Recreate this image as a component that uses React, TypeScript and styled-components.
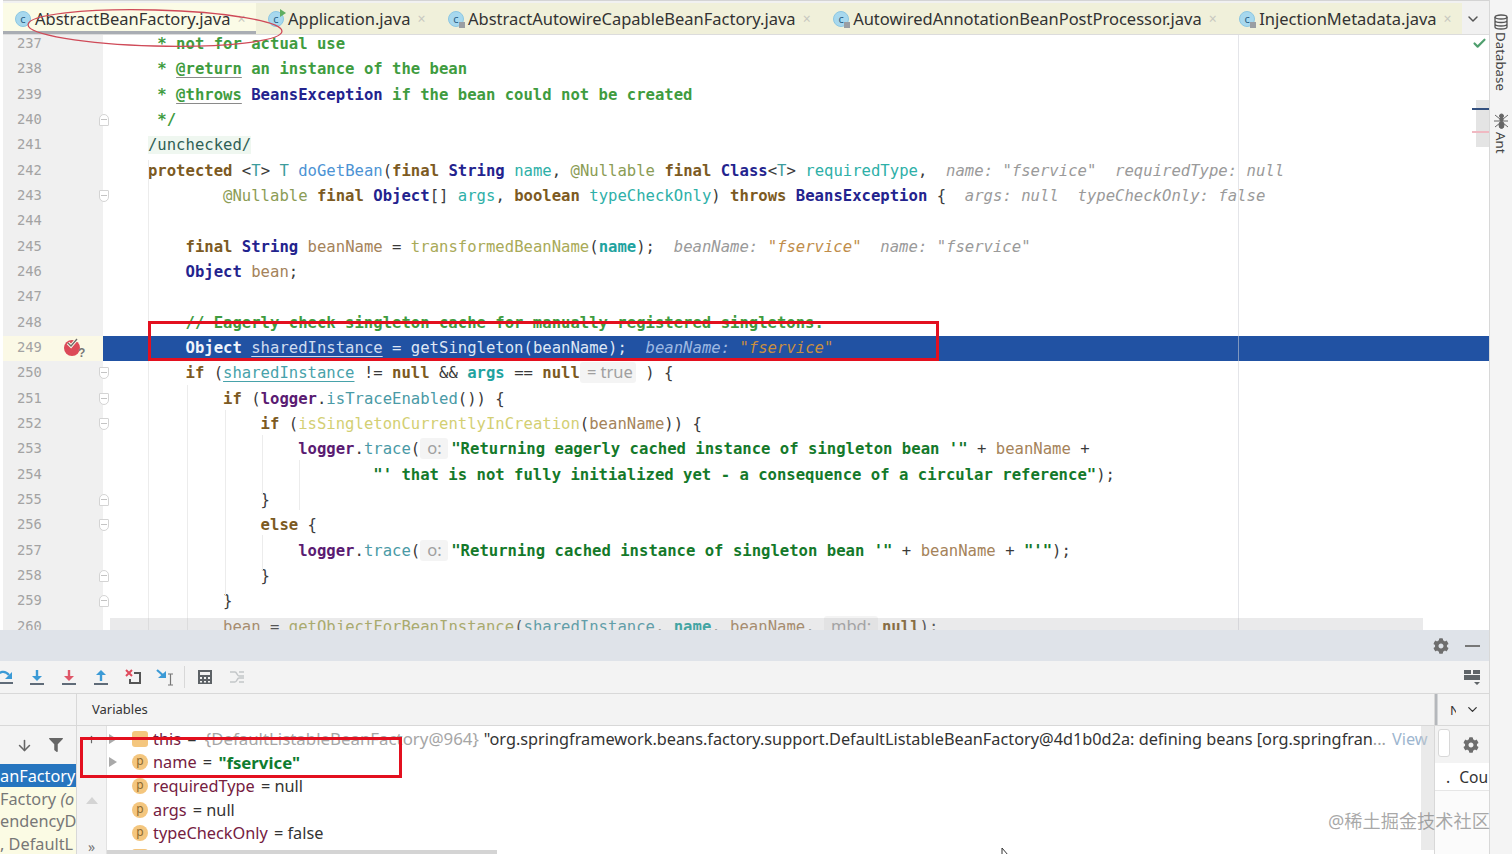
import React from "react";
import styled, { createGlobalStyle, css } from "styled-components";
import { ArrowDown, ChevronDown, Check, Plus } from "lucide-react";
import { FaCog, FaFilter } from "react-icons/fa";

const Global = createGlobalStyle`
  html, body { margin: 0; padding: 0; background: #fff; overflow: hidden; }
  * { box-sizing: border-box; }
`;

const MONO = `"DejaVu Sans Mono", monospace`;
const UI = `"Noto Sans", "Open Sans", sans-serif`;

const Page = styled.div`
  position: relative;
  width: 1512px;
  height: 854px;
  display: flex;
  overflow: hidden;
  font-family: ${UI};
`;
const Main = styled.div`
  width: 1489px;
  display: flex;
  flex-direction: column;
`;

/* tabs */
const TabBar = styled.div`
  height: 35px;
  margin-left: 3px;
  padding-top: 3px;
  display: flex;
  background: linear-gradient(#d4d4d4 0 1px, #f1f1f1 1px);
  border-bottom: 1px solid #dcdcdc;
`;
const Tab = styled.div<{ $active?: boolean }>`
  display: flex;
  align-items: center;
  flex: none;
  padding: 0 8.5px 0 12px;
  font-size: 16.5px;
  color: #333;
  background: ${(p) => (p.$active ? "#fbfbe6" : "#f0f0da")};
  ${(p) => p.$active && css`box-shadow: inset 0 -3px 0 #a9adb3;`}
`;
const ClassIcon = styled.span<{ $badge?: "lock" | "run" }>`
  position: relative;
  flex: none;
  width: 16px;
  height: 16px;
  margin-right: 4px;
  border-radius: 50%;
  background: #a7d8ee;
  border: 1px solid #8cc7e2;
  color: #2b5f85;
  font-size: 11px;
  line-height: 13px;
  text-align: center;
  &::after {
    content: "";
    position: absolute;
    ${(p) =>
      p.$badge === "run"
        ? css`
            top: -3px;
            right: -3px;
            width: 0;
            height: 0;
            border-left: 6px solid #5fae60;
            border-top: 4px solid transparent;
            border-bottom: 4px solid transparent;
          `
        : p.$badge === "lock"
        ? css`
            right: -2px;
            bottom: -2px;
            width: 6px;
            height: 6px;
            background: #9a9ea3;
          `
        : ""}
  }
`;
const TabClose = styled.span`
  margin-left: 7px;
  width: 10px;
  color: #c8c8c0;
  font-size: 14px;
  line-height: 1;
`;
const TabsEnd = styled.div`
  flex: 1;
  display: flex;
  align-items: center;
  justify-content: flex-end;
  padding-right: 8px;
  color: #555;
`;

/* editor */
const Editor = styled.div`
  position: relative;
  height: 595px;
  overflow: hidden;
  background: #fff;
`;
const Lines = styled.div`
  margin-top: -3px;
`;
const LineRow = styled.div<{ $current?: boolean }>`
  display: flex;
  height: 25.33px;
  line-height: 25.33px;
  font-family: ${MONO};
  font-size: 15.6px;
  background: ${(p) => (p.$current ? "#2152a3" : "transparent")};
`;
const Gutter = styled.div<{ $current?: boolean }>`
  position: relative;
  flex: none;
  width: 100px;
  margin-left: 3px;
  display: flex;
  background: ${(p) => (p.$current ? "#fbf9e6" : "#f0f0f0")};
  box-shadow: -3px 0 0 #fff;
`;
const LineNo = styled.span`
  width: 42px;
  padding-left: 14px;
  font-size: 13.8px;
  line-height: 23.6px;
  color: #a3a3a3;
  white-space: nowrap;
`;
const Fold = styled.span<{ $up?: boolean }>`
  position: absolute;
  right: -6px;
  top: 6px;
  width: 10px;
  height: 12px;
  background: #fff;
  border: 1px solid #d4d4d4;
  border-radius: ${(p) => (p.$up ? "5px 5px 1px 1px" : "1px 1px 5px 5px")};
  &::after {
    content: "";
    position: absolute;
    left: 1px;
    right: 1px;
    top: 4px;
    height: 1px;
    background: #c4c4c4;
  }
`;
const Code = styled.pre`
  margin: 0;
  padding-left: 7.4px;
  font: inherit;
  line-height: inherit;
  color: #3a3a3a;
  white-space: pre;
`;

const kinds: Record<string, ReturnType<typeof css>> = {
  kw: css`color: #7c5a22; font-weight: bold;`,
  type: css`color: #23238e; font-weight: bold;`,
  tpar: css`color: #3d9c9c;`,
  decl: css`color: #4c93d4;`,
  param: css`color: #2eb0a8;`,
  paramB: css`color: #1fa3a0; font-weight: bold;`,
  annot: css`color: #8b9c55;`,
  local: css`color: #a5835a;`,
  fn: css`color: #a9aa58;`,
  fn2: css`color: #d3cf73;`,
  logger: css`color: #5a1b72; font-weight: bold;`,
  call: css`color: #4a9aa6;`,
  str: css`color: #14792a; font-weight: bold;`,
  doc: css`color: #3f9c3f; font-weight: bold;`,
  tag: css`color: #3f9c3f; font-weight: bold; text-decoration: underline; text-decoration-color: #8a8a8a; text-underline-offset: 3px;`,
  unchecked: css`color: #2f5f55; background: #eff7f0;`,
  shared: css`color: #47a2aa; text-decoration: underline; text-underline-offset: 3px;`,
  hint: css`color: #9a9a9a; font-style: italic;`,
  hintStr: css`color: #c08d4a; font-style: italic;`,
  selB: css`color: #f2f5fb; font-weight: bold;`,
  sel: css`color: #dfe7f5;`,
  selShared: css`color: #cfdcf0; text-decoration: underline; text-underline-offset: 3px;`,
  selHint: css`color: #9db8e2; font-style: italic;`,
  selStr: css`color: #c98f3f; font-style: italic;`,
  plain: css``,
};
const Tok = styled.span<{ $k: string }>`
  ${(p) => kinds[p.$k]}
`;
const InlineHint = styled.span<{ $w: number; $after?: number }>`
  display: inline-block;
  width: ${(p) => p.$w}px;
  margin-right: ${(p) => p.$after ?? 0}px;
  padding-left: 7px;
  height: 21px;
  line-height: 20px;
  border-radius: 3px;
  background: #f4f4f4;
  color: #a0a0a0;
  font-family: ${UI};
  font-size: 16.5px;
  white-space: nowrap;
`;

type T = [string, string] | { hint: string; w: number; after?: number };
type L = { n: number; fold?: "up" | "down"; current?: boolean; toks: T[] };

const lines: L[] = [
  { n: 237, toks: [["doc", "     * not for actual use"]] },
  { n: 238, toks: [["doc", "     * "], ["tag", "@return"], ["doc", " an instance of the bean"]] },
  { n: 239, toks: [["doc", "     * "], ["tag", "@throws"], ["plain", " "], ["type", "BeansException"], ["doc", " if the bean could not be created"]] },
  { n: 240, fold: "up", toks: [["doc", "     */"]] },
  { n: 241, toks: [["plain", "    "], ["unchecked", "/unchecked/"]] },
  {
    n: 242,
    toks: [
      ["plain", "    "], ["kw", "protected"], ["plain", " <"], ["tpar", "T"], ["plain", "> "], ["tpar", "T"], ["plain", " "],
      ["decl", "doGetBean"], ["plain", "("], ["kw", "final"], ["plain", " "], ["type", "String"], ["plain", " "], ["param", "name"],
      ["plain", ", "], ["annot", "@Nullable"], ["plain", " "], ["kw", "final"], ["plain", " "], ["type", "Class"], ["plain", "<"],
      ["tpar", "T"], ["plain", "> "], ["param", "requiredType"], ["plain", ",  "], ["hint", 'name: "fservice"  requiredType: null'],
    ],
  },
  {
    n: 243,
    fold: "down",
    toks: [
      ["plain", "            "], ["annot", "@Nullable"], ["plain", " "], ["kw", "final"], ["plain", " "], ["type", "Object"], ["plain", "[] "],
      ["param", "args"], ["plain", ", "], ["kw", "boolean"], ["plain", " "], ["param", "typeCheckOnly"], ["plain", ") "], ["kw", "throws"],
      ["plain", " "], ["type", "BeansException"], ["plain", " {  "], ["hint", "args: null  typeCheckOnly: false"],
    ],
  },
  { n: 244, toks: [] },
  {
    n: 245,
    toks: [
      ["plain", "        "], ["kw", "final"], ["plain", " "], ["type", "String"], ["plain", " "], ["local", "beanName"], ["plain", " = "],
      ["fn", "transformedBeanName"], ["plain", "("], ["paramB", "name"], ["plain", ");  "], ["hint", "beanName: "], ["hintStr", '"fservice"'],
      ["hint", '  name: "fservice"'],
    ],
  },
  { n: 246, toks: [["plain", "        "], ["type", "Object"], ["plain", " "], ["local", "bean"], ["plain", ";"]] },
  { n: 247, toks: [] },
  { n: 248, toks: [["doc", "        // Eagerly check singleton cache for manually registered singletons."]] },
  {
    n: 249,
    current: true,
    toks: [
      ["plain", "        "], ["selB", "Object"], ["sel", " "], ["selShared", "sharedInstance"], ["sel", " = getSingleton(beanName);  "],
      ["selHint", "beanName: "], ["selStr", '"fservice"'],
    ],
  },
  {
    n: 250,
    fold: "down",
    toks: [
      ["plain", "        "], ["kw", "if"], ["plain", " ("], ["shared", "sharedInstance"], ["plain", " != "], ["kw", "null"], ["plain", " && "],
      ["paramB", "args"], ["plain", " == "], ["kw", "null"], { hint: "= true", w: 56 }, ["plain", " ) {"],
    ],
  },
  {
    n: 251,
    fold: "down",
    toks: [
      ["plain", "            "], ["kw", "if"], ["plain", " ("], ["logger", "logger"], ["plain", "."], ["call", "isTraceEnabled"], ["plain", "()) {"],
    ],
  },
  {
    n: 252,
    fold: "down",
    toks: [
      ["plain", "                "], ["kw", "if"], ["plain", " ("], ["fn2", "isSingletonCurrentlyInCreation"], ["plain", "("], ["local", "beanName"],
      ["plain", ")) {"],
    ],
  },
  {
    n: 253,
    toks: [
      ["plain", "                    "], ["logger", "logger"], ["plain", "."], ["call", "trace"], ["plain", "("], { hint: "o:", w: 28, after: 3 },
      ["str", "\"Returning eagerly cached instance of singleton bean '\""], ["plain", " + "], ["local", "beanName"], ["plain", " +"],
    ],
  },
  { n: 254, toks: [["plain", "                            "], ["str", "\"' that is not fully initialized yet - a consequence of a circular reference\""], ["plain", ");"]] },
  { n: 255, fold: "up", toks: [["plain", "                }"]] },
  { n: 256, fold: "down", toks: [["plain", "                "], ["kw", "else"], ["plain", " {"]] },
  {
    n: 257,
    toks: [
      ["plain", "                    "], ["logger", "logger"], ["plain", "."], ["call", "trace"], ["plain", "("], { hint: "o:", w: 28, after: 3 },
      ["str", "\"Returning cached instance of singleton bean '\""], ["plain", " + "], ["local", "beanName"], ["plain", " + "], ["str", "\"'\""],
      ["plain", ");"],
    ],
  },
  { n: 258, fold: "up", toks: [["plain", "                }"]] },
  { n: 259, fold: "up", toks: [["plain", "            }"]] },
  {
    n: 260,
    toks: [
      ["plain", "            "], ["local", "bean"], ["plain", " = "], ["fn", "getObjectForBeanInstance"], ["plain", "("], ["call", "sharedInstance"],
      ["plain", ", "], ["paramB", "name"], ["plain", ", "], ["local", "beanName"], ["plain", ", "], { hint: "mbd:", w: 54, after: 4 }, ["kw", "null"],
      ["plain", ");"],
    ],
  },
];

const MarginLine = styled.div`
  position: absolute;
  left: 1238px;
  top: 0;
  bottom: 0;
  width: 1px;
  background: rgba(205, 208, 215, 0.55);
`;
const Guide = styled.div<{ $x: number; $top: number; $h: number }>`
  position: absolute;
  left: ${(p) => p.$x}px;
  top: ${(p) => p.$top}px;
  height: ${(p) => p.$h}px;
  width: 1px;
  background: #ececec;
`;
const HScroll = styled.div`
  position: absolute;
  left: 110px;
  right: 66px;
  bottom: 0;
  height: 12px;
  background: rgba(170, 170, 175, 0.25);
`;
const StripeThumb = styled.div`
  position: absolute;
  right: 0;
  top: 65px;
  width: 13px;
  height: 47px;
  background: #e4e4e4;
`;
const StripeTick = styled.div<{ $top: number; $color: string }>`
  position: absolute;
  right: 0;
  top: ${(p) => p.$top}px;
  width: 17px;
  height: 2px;
  background: ${(p) => p.$color};
`;
const OkMark = styled.div`
  position: absolute;
  right: 2px;
  top: 1px;
  color: #4f9f6e;
  display: flex;
`;
const BreakIcon = styled.svg`
  position: absolute;
  left: 60px;
  top: -1px;
`;

/* debug panel */
const Debug = styled.div`
  flex: 1;
  display: flex;
  flex-direction: column;
  min-height: 0;
  background: #f3f3f3;
`;
const DebugHead = styled.div`
  height: 31px;
  flex: none;
  display: flex;
  align-items: center;
  justify-content: flex-end;
  gap: 16px;
  padding-right: 9px;
  background: #dfe3e9;
  color: #6e6e6e;
`;
const MinusLine = styled.span`
  width: 15px;
  height: 2px;
  background: #777;
`;
const Toolbar = styled.div`
  height: 33px;
  flex: none;
  display: flex;
  align-items: center;
  padding-right: 8px;
  margin-left: -11px;
  border-bottom: 1px solid #d8d8d8;
`;
const ToolBtn = styled.span`
  flex: none;
  width: 32px;
  display: flex;
  justify-content: center;
`;
const ToolSep = styled.span`
  width: 1px;
  height: 22px;
  margin: 0 4px 0 3px;
  background: #d8d8d8;
`;
const ToolSpacer = styled.span`
  flex: 1;
`;
const Columns = styled.div`
  flex: 1;
  display: flex;
  min-height: 0;
`;
const Frames = styled.div`
  width: 77px;
  flex: none;
  display: flex;
  flex-direction: column;
  overflow: hidden;
  border-right: 1px solid #d8d8d8;
`;
const FramesHead = styled.div`
  height: 32px;
  flex: none;
  border-bottom: 1px solid #d8d8d8;
`;
const FramesTools = styled.div`
  height: 38px;
  flex: none;
  display: flex;
  align-items: center;
  gap: 16px;
  padding: 0 0 0 16px;
  color: #666;
`;
const FrameRow = styled.div<{ $selected?: boolean }>`
  height: 23.6px;
  line-height: 25px;
  font-size: 16.3px;
  white-space: nowrap;
  overflow: hidden;
  color: ${(p) => (p.$selected ? "#fff" : "#777")};
  background: ${(p) => (p.$selected ? "#2675bf" : "#fbfbe4")};
`;
const FramesFill = styled.div`
  flex: 1;
  background: #fbfbe4;
`;
const VarsCol = styled.div`
  flex: 1;
  min-width: 0;
  display: flex;
  flex-direction: column;
  border-right: 1px solid #d8d8d8;
`;
const VarsHead = styled.div`
  height: 32px;
  flex: none;
  padding-left: 15px;
  line-height: 30px;
  font-size: 13px;
  color: #333;
  border-bottom: 1px solid #d8d8d8;
`;
const VarsBody = styled.div`
  flex: 1;
  display: flex;
  min-height: 0;
  position: relative;
`;
const VarsTools = styled.div`
  width: 30px;
  flex: none;
  display: flex;
  flex-direction: column;
  align-items: center;
  padding-top: 8px;
  color: #666;
  border-right: 1px solid #e2e2e2;
`;
const ScrollUp = styled.span`
  margin-top: 52px;
  width: 0;
  height: 0;
  border-left: 6px solid transparent;
  border-right: 6px solid transparent;
  border-bottom: 7px solid #d4d4d4;
`;
const More = styled.span`
  margin-top: 36px;
  font-size: 14px;
  line-height: 14px;
  color: #777;
`;
const VarList = styled.div`
  flex: 1;
  min-width: 0;
  padding-top: 1px;
  background: #fff;
  overflow: hidden;
`;
const VarRow = styled.div`
  height: 23.6px;
  display: flex;
  align-items: center;
  font-size: 16.3px;
  white-space: nowrap;
  color: #333;
`;
const Arrow = styled.span<{ $show?: boolean }>`
  flex: none;
  width: 0;
  height: 0;
  margin: 0 15px 0 2px;
  border-left: 8px solid ${(p) => (p.$show ? "#a9a9a9" : "transparent")};
  border-top: 5px solid transparent;
  border-bottom: 5px solid transparent;
`;
const VarIcon = styled.span<{ $square?: boolean }>`
  flex: none;
  width: 16px;
  height: 16px;
  margin-right: 5px;
  border-radius: ${(p) => (p.$square ? "3px" : "50%")};
  background: #f4c67e;
  color: #8c6a2e;
  font-size: 12px;
  line-height: 14px;
  text-align: center;
`;
const VarName = styled.span`
  color: #75203f;
`;
const VarEq = styled.span`
  margin: 0 2px;
  white-space: pre;
`;
const VarStr = styled.span`
  color: #0f7c2f;
  font-size: 16.8px;
  font-weight: bold;
`;
const VarRef = styled.span`
  margin-left: 2px;
  font-size: 16.85px;
  color: #a6a6a6;
`;
const VarDesc = styled.span`
  margin-left: 5px;
  color: #333;
`;
const Dots = styled.span`
  color: #a0a0a0;
`;
const ViewLink = styled.span`
  margin-left: 6px;
  color: #9db6cf;
`;
const VScroll = styled.div`
  position: absolute;
  right: 0;
  top: 0;
  bottom: 4px;
  width: 13px;
  background: rgba(205, 205, 205, 0.42);
`;
const HThumb = styled.div`
  position: absolute;
  left: 30px;
  bottom: 0;
  width: 390px;
  height: 4px;
  background: #d4d4d4;
`;
const Watch = styled.div`
  width: 54px;
  flex: none;
  display: flex;
  flex-direction: column;
  overflow: hidden;
`;
const WatchHead = styled.div`
  height: 32px;
  flex: none;
  display: flex;
  align-items: center;
  padding: 0 0 0 15px;
  gap: 9px;
  font-size: 13px;
  color: #333;
  border-bottom: 1px solid #d8d8d8;
  box-shadow: inset 22px -3px 0 -19.5px #b4b7bb;
`;
const ClippedTab = styled.span`
  width: 6px;
  overflow: hidden;
`;
const WatchTools = styled.div`
  height: 37px;
  flex: none;
  display: flex;
  align-items: center;
  justify-content: flex-end;
  padding-right: 10px;
  color: #6e6e6e;
  position: relative;
`;
const MiniBox = styled.span`
  position: absolute;
  left: 3px;
  top: 3px;
  width: 12px;
  height: 28px;
  background: #fff;
  border: 1px solid #d8d8d8;
  border-radius: 3px;
`;
const WatchRow = styled.div`
  height: 28px;
  flex: none;
  display: flex;
  gap: 9px;
  padding-left: 11px;
  line-height: 28px;
  font-size: 15.6px;
  white-space: nowrap;
  background: #fff;
  color: #333;
  border-bottom: 1px solid #e6e6e6;
`;
const WatchFill = styled.div`
  flex: 1;
  background: #fbfbfb;
`;

/* right strip */
const Strip = styled.div`
  width: 23px;
  flex: none;
  display: flex;
  flex-direction: column;
  align-items: center;
  padding-top: 14px;
  background: #f4f4f4;
  border-left: 1px solid #d8d8d8;
  color: #444;
  font-size: 13.3px;
`;
const StripLabel = styled.span<{ $gap?: number }>`
  writing-mode: vertical-rl;
  margin-top: ${(p) => p.$gap ?? 0}px;
  line-height: 16px;
`;
const AntIcon = styled.svg`
  margin-top: 22px;
`;

/* annotations drawn on top of the screenshot */
const RedBox = styled.div<{ $x: number; $y: number; $w: number; $h: number }>`
  position: absolute;
  left: ${(p) => p.$x}px;
  top: ${(p) => p.$y}px;
  width: ${(p) => p.$w}px;
  height: ${(p) => p.$h}px;
  border: 3px solid #e3101f;
  pointer-events: none;
`;
const Ellipse = styled.svg`
  position: absolute;
  left: 24px;
  top: 4px;
`;
const Watermark = styled.div`
  position: absolute;
  left: 1328px;
  top: 807px;
  font-family: "Noto Sans", "Noto Sans CJK SC", sans-serif;
  font-size: 18.2px;
  white-space: nowrap;
  color: rgba(110, 110, 110, 0.6);
`;
const Cursor = styled.svg`
  position: absolute;
  left: 1001px;
  top: 848px;
`;

const BarIcon = ({ color, up }: { color: string; up?: boolean }) => (
  <svg width="16" height="18" viewBox="0 0 16 18" fill="none">
    <path d="M1 16h14" stroke="#5f6b78" strokeWidth="2" />
    <path d={up ? "M8 13V4" : "M8 2v9"} stroke={color} strokeWidth="2.4" />
    <path d={up ? "M3 7l5-5 5 5z" : "M3 8l5 5 5-5z"} fill={color} />
  </svg>
);

const App = () => {
  return (
    <Page>
      <Global />
      <Main>
        <TabBar>
          <Tab $active>
            <ClassIcon>c</ClassIcon>AbstractBeanFactory.java<TabClose>×</TabClose>
          </Tab>
          <Tab>
            <ClassIcon $badge="run">c</ClassIcon>Application.java<TabClose>×</TabClose>
          </Tab>
          <Tab>
            <ClassIcon $badge="lock">c</ClassIcon>AbstractAutowireCapableBeanFactory.java<TabClose>×</TabClose>
          </Tab>
          <Tab>
            <ClassIcon $badge="lock">c</ClassIcon>AutowiredAnnotationBeanPostProcessor.java<TabClose>×</TabClose>
          </Tab>
          <Tab>
            <ClassIcon $badge="lock">c</ClassIcon>InjectionMetadata.java<TabClose>×</TabClose>
          </Tab>
          <TabsEnd>
            <ChevronDown size={16} strokeWidth={2.2} />
          </TabsEnd>
        </TabBar>
        <Editor>
          <Lines>
            {lines.map((l) => (
              <LineRow key={l.n} $current={l.current}>
                <Gutter $current={l.current}>
                  <LineNo>{l.n}</LineNo>
                  {l.current && (
                    <BreakIcon width="24" height="24" viewBox="0 0 24 24">
                      <circle cx="9" cy="13" r="8" fill="#dc4a58" />
                      <path d="M5 8l3 3 6-7" fill="none" stroke="#fbf9e6" strokeWidth="3.4" />
                      <path d="M5 8l3 3 6-7" fill="none" stroke="#6b6b6b" strokeWidth="1.3" />
                      <text x="15" y="22" fontSize="12" fontWeight="bold" fill="#777" fontFamily="Liberation Sans, sans-serif">?</text>
                    </BreakIcon>
                  )}
                  {l.fold && <Fold $up={l.fold === "up"} />}
                </Gutter>
                <Code>
                  {l.toks.map((t, i) =>
                    Array.isArray(t) ? (
                      <Tok key={i} $k={t[0]}>{t[1]}</Tok>
                    ) : (
                      <InlineHint key={i} $w={t.w} $after={t.after}>{t.hint}</InlineHint>
                    )
                  )}
                </Code>
              </LineRow>
            ))}
          </Lines>
          <MarginLine />
          <Guide $x={148} $top={125} $h={470} />
          <Guide $x={187} $top={350} $h={245} />
          <Guide $x={225} $top={375} $h={185} />
          <Guide $x={262} $top={400} $h={60} />
          <Guide $x={262} $top={500} $h={35} />
          <Guide $x={299} $top={425} $h={50} />
          <HScroll />
          <StripeThumb />
          <StripeTick $top={73} $color="#33507f" />
          <StripeTick $top={96} $color="#f0b9c2" />
          <OkMark>
            <Check size={15} strokeWidth={3.4} />
          </OkMark>
        </Editor>
        <Debug>
          <DebugHead>
            <FaCog size={16} />
            <MinusLine />
          </DebugHead>
          <Toolbar>
            <ToolBtn>
              <svg width="20" height="18" viewBox="0 0 20 18" fill="none">
                <path d="M1 15h17" stroke="#5f6b78" strokeWidth="2" />
                <path d="M2 9c2-6 8-7 12-2" stroke="#3b9ad6" strokeWidth="2.2" />
                <path d="M10 11h7V4z" fill="#3b9ad6" />
              </svg>
            </ToolBtn>
            <ToolBtn><BarIcon color="#3b9ad6" /></ToolBtn>
            <ToolBtn><BarIcon color="#df5668" /></ToolBtn>
            <ToolBtn><BarIcon color="#3b9ad6" up /></ToolBtn>
            <ToolBtn>
              <svg width="18" height="18" viewBox="0 0 18 18" fill="none">
                <path d="M2 2l6 6M8 2l-6 6" stroke="#df4a5c" strokeWidth="2" />
                <path d="M10 5h6v10H6v-4" stroke="#555" strokeWidth="2" />
              </svg>
            </ToolBtn>
            <ToolBtn>
              <svg width="20" height="18" viewBox="0 0 20 18" fill="none">
                <path d="M2 2l8 7" stroke="#3b9ad6" strokeWidth="2.2" />
                <path d="M3 10h8V3z" fill="#3b9ad6" />
                <path d="M13 6h5M13 17h5M15.5 6v11" stroke="#777" strokeWidth="1.2" />
              </svg>
            </ToolBtn>
            <ToolSep />
            <ToolBtn>
              <svg width="16" height="16" viewBox="0 0 16 16">
                <path fillRule="evenodd" fill="#5d6266" d="M1 1h14v14H1zM3 3v3h10V3zM3 8v2h2V8zm4 0v2h2V8zm4 0v2h2V8zM3 12v1.500h2V12zm4 0v1.500h2V12zm4 0v1.500h2V12z" />
              </svg>
            </ToolBtn>
            <ToolBtn>
              <svg width="16" height="14" viewBox="0 0 16 14" fill="none" stroke="#c4c7c9" strokeWidth="1.6">
                <path d="M1 2h5c2 0 2 4 4 4h5M1 12h5c2 0 2-4 4-4h5M10 2h5M10 12h5" />
              </svg>
            </ToolBtn>
            <ToolSpacer />
            <svg width="18" height="18" viewBox="0 0 18 18">
              <path fill="#5f6468" d="M1 2h7v4H1zM10 2h7v4h-7zM1 7h16v5H1zM11 14h6l-3 3z" />
            </svg>
          </Toolbar>
          <Columns>
            <Frames>
              <FramesHead />
              <FramesTools>
                <ArrowDown size={17} strokeWidth={2.2} />
                <FaFilter size={14} />
              </FramesTools>
              <FrameRow $selected>anFactory</FrameRow>
              <FrameRow>Factory <i>(o</i></FrameRow>
              <FrameRow>endencyDe</FrameRow>
              <FrameRow>, DefaultL</FrameRow>
              <FramesFill />
            </Frames>
            <VarsCol>
              <VarsHead>Variables</VarsHead>
              <VarsBody>
                <VarsTools>
                  <Plus size={17} strokeWidth={2.6} />
                  <ScrollUp />
                  <More>»</More>
                </VarsTools>
                <VarList>
                  <VarRow>
                    <Arrow $show />
                    <VarIcon $square />
                    <VarName>this</VarName>
                    <VarEq> = </VarEq>
                    <VarRef>{"{DefaultListableBeanFactory@964}"}</VarRef>
                    <VarDesc>
                      "org.springframework.beans.factory.support.DefaultListableBeanFactory@4d1b0d2a: defining beans [org.springfran
                    </VarDesc>
                    <Dots>...</Dots>
                    <ViewLink>View</ViewLink>
                  </VarRow>
                  <VarRow>
                    <Arrow $show />
                    <VarIcon>p</VarIcon>
                    <VarName>name</VarName>
                    <VarEq> = </VarEq>
                    <VarStr>"fservice"</VarStr>
                  </VarRow>
                  <VarRow>
                    <Arrow />
                    <VarIcon>p</VarIcon>
                    <VarName>requiredType</VarName>
                    <VarEq> = null</VarEq>
                  </VarRow>
                  <VarRow>
                    <Arrow />
                    <VarIcon>p</VarIcon>
                    <VarName>args</VarName>
                    <VarEq> = null</VarEq>
                  </VarRow>
                  <VarRow>
                    <Arrow />
                    <VarIcon>p</VarIcon>
                    <VarName>typeCheckOnly</VarName>
                    <VarEq> = false</VarEq>
                  </VarRow>
                  <VarRow>
                    <Arrow $show />
                    <VarIcon $square />
                    <VarName>beanName</VarName>
                    <VarEq> = </VarEq>
                    <VarStr>"fservice"</VarStr>
                  </VarRow>
                </VarList>
                <VScroll />
                <HThumb />
              </VarsBody>
            </VarsCol>
            <Watch>
              <WatchHead>
                <ClippedTab>N</ClippedTab>
                <ChevronDown size={15} strokeWidth={2} />
              </WatchHead>
              <WatchTools>
                <MiniBox />
                <FaCog size={16} />
              </WatchTools>
              <WatchRow>
                <span>.</span>
                <span>Cou</span>
              </WatchRow>
              <WatchFill />
            </Watch>
          </Columns>
        </Debug>
      </Main>
      <Strip>
        <svg width="14" height="16" viewBox="0 0 14 16" fill="none" stroke="#555" strokeWidth="1.3">
          <ellipse cx="7" cy="3" rx="6" ry="2" />
          <path d="M1 3v10c0 1 2.500 2 6 2s6-1 6-2V3M1 6.500c0 1 2.500 2 6 2s6-1 6-2M1 10c0 1 2.500 2 6 2s6-1 6-2" />
        </svg>
        <StripLabel $gap={2}>Database</StripLabel>
        <AntIcon width="15" height="16" viewBox="0 0 15 16" fill="#666" stroke="#666">
          <ellipse cx="7.500" cy="3" rx="2" ry="2" />
          <ellipse cx="7.500" cy="6.500" rx="1.600" ry="2" />
          <ellipse cx="7.500" cy="12" rx="2.500" ry="3.500" />
          <path d="M1 2l5 4M14 2L9 6M0 8h14M1 14l5-4M14 14l-5-4" fill="none" />
        </AntIcon>
        <StripLabel $gap={3}>Ant</StripLabel>
      </Strip>
      <RedBox $x={148} $y={321} $w={791} $h={40} />
      <RedBox $x={80} $y={737} $w={322} $h={41} />
      <Ellipse width="264" height="48" viewBox="0 0 264 48" fill="none">
        <ellipse cx="131" cy="24" rx="127" ry="18" stroke="#cf4a58" strokeWidth="1.3" transform="rotate(1.500 131 24)" />
      </Ellipse>
      <Watermark>@稀土掘金技术社区</Watermark>
      <Cursor width="9" height="7" viewBox="0 0 9 7">
        <path d="M1 0l0 7 6 0z" fill="#fff" stroke="#333" />
      </Cursor>
    </Page>
  );
};

export default App;
